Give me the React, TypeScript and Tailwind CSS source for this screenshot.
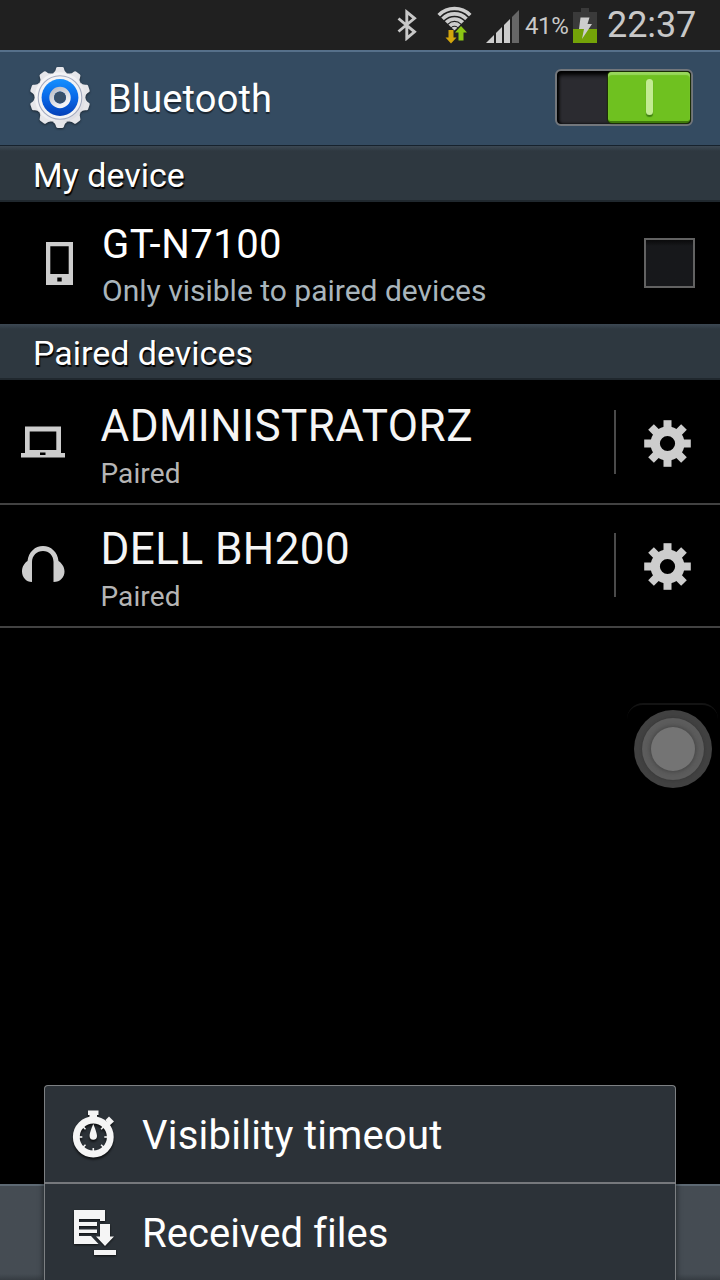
import type { ReactNode } from "react"

type Device = { name: string; status: string; icon: ReactNode }

const BluetoothIcon = () => (
  <svg className="w-5 h-8 shrink-0" viewBox="397 9 20 32" fill="none">
    <path
      d="M398.5 18.5L414.5 31.8L406.8 38.3V12L414.5 18.3L398.5 31.5"
      stroke="#c8c8c8"
      strokeWidth="2.9"
    />
  </svg>
)

const WifiIcon = () => (
  <svg className="w-9 h-[38px] shrink-0" viewBox="437 6 36 38">
    <clipPath id="fan">
      <path d="M454.5 30.5L434.500 11V4H474.5V11Z" />
    </clipPath>
    <g clipPath="url(#fan)" fill="none" stroke="#cdcdcd" strokeWidth="3.7">
      <circle cx="454.5" cy="30.5" r="22" />
      <circle cx="454.5" cy="30.5" r="16.7" />
      <circle cx="454.5" cy="30.5" r="11.5" />
      <circle cx="454.5" cy="30.5" r="6.6" />
      <circle cx="454.5" cy="30.5" r="2" />
    </g>
    <path d="M448.5 30H453.5V37.5H456.5L451 43.5L445.5 37.5H448.5Z" fill="#d3a50c" />
    <path d="M458.5 40.5H463.5V32.5H467L461 26L455 32.5H458.5Z" fill="#8bc514" />
  </svg>
)

const SignalIcon = () => (
  <svg className="w-[34px] h-[34px] shrink-0" viewBox="486 10 34 34">
    <path d="M486 43L494 35V43Z" fill="#cdcdcd" />
    <path d="M496 33L502 27V43H496Z" fill="#cdcdcd" />
    <path d="M504 25L510 19V43H504Z" fill="#cdcdcd" />
    <path d="M512 17L519 10V43H512Z" fill="#666" />
  </svg>
)

const BatteryIcon = () => (
  <svg className="w-6 h-9 shrink-0" viewBox="573 8 24 36">
    <path d="M581 8H589V12H597V29H573V12H581Z" fill="#3a3a3a" />
    <path d="M573 29H597V43H573Z" fill="#74a308" />
    <path d="M580.5 17.5H589.5L587.5 24H592L582 39L584 29H579Z" fill="#cdcdcd" />
  </svg>
)

const SettingsLogo = () => (
  <svg
    className="w-16 h-16 shrink-0 drop-shadow-[0_1px_1px_rgba(0,0,0,0.5)]"
    viewBox="-32 -32.5 64 64"
  >
    <defs>
      <linearGradient id="metal" x1="0" y1="0" x2="1" y2="1">
        <stop offset="0" stopColor="#f6f6f8" />
        <stop offset="0.55" stopColor="#f0f0f3" />
        <stop offset="1" stopColor="#d5d5dc" />
      </linearGradient>
      <linearGradient id="blue" x1="0" y1="0" x2="0" y2="1">
        <stop offset="0" stopColor="#1590ff" />
        <stop offset="0.5" stopColor="#0868e8" />
        <stop offset="1" stopColor="#0540b8" />
      </linearGradient>
      <linearGradient id="ring" x1="0" y1="0" x2="0.6" y2="1">
        <stop offset="0" stopColor="#b9bcc6" />
        <stop offset="1" stopColor="#f4f4f6" />
      </linearGradient>
    </defs>
    {[0, 36, 72, 108, 144, 180, 216, 252, 288, 324].map((angle) => (
      <path
        key={angle}
        d="M-8 -24Q-4.5 -25.5 -4 -29Q-3.7 -30.4 -2.3 -30.4H2.3Q3.7 -30.4 4 -29Q4.5 -25.5 8 -24Z"
        fill="#e6e6ea"
        transform={`rotate(${angle})`}
      />
    ))}
    <circle r="25.2" fill="url(#metal)" />
    <circle r="21.8" fill="#f3f3f5" stroke="#a4abc0" strokeWidth="1.1" />
    <circle r="18.4" fill="url(#blue)" />
    <circle r="8.3" fill="none" stroke="url(#ring)" strokeWidth="4.8" />
    <circle r="6" fill="#38506a" />
  </svg>
)

const Gear = () => (
  <svg className="w-12 h-12 shrink-0" viewBox="-23.5 -23.5 48 48" fill="#cdcdcd">
    {[0, 45, 90, 135, 180, 225, 270, 315].map((angle) => (
      <rect key={angle} x="-4" y="-23.3" width="8" height="11" transform={`rotate(${angle})`} />
    ))}
    <circle r="12.3" fill="none" stroke="#cdcdcd" strokeWidth="9.4" />
  </svg>
)

const PhoneIcon = () => (
  <svg className="w-[27px] h-[43px] shrink-0" viewBox="0 0 27 43">
    <path
      d="M0 0H27V43H0ZM4.3 4.3V32H22.7V4.3ZM11.3 35.5V39.5H15.7V35.5Z"
      fill="#cdcdcd"
      fillRule="evenodd"
    />
  </svg>
)

const LaptopIcon = () => (
  <svg className="w-11 h-[34px] shrink-0" viewBox="0 0 44 34">
    <path
      d="M4 0.5H40V27H44V31.5H0V27H4ZM8.7 5.5V24H35.3V5.5ZM19 26.5V29H24.5V26.5Z"
      fill="#cdcdcd"
      fillRule="evenodd"
    />
  </svg>
)

const HeadphonesIcon = () => (
  <svg className="w-11 h-10 shrink-0" viewBox="0 0 44 40">
    <path
      d="M11 36C5 36 1 31 1 25.5C1 20.5 3.5 17 6.5 15C7.5 6 14 0 22 0S36.5 6 37.5 15C40.5 17 43.5 20.5 43.5 25.5C43.5 31 39.5 36 32.5 36V16C32.5 9.5 28 5 22 5S11 9.5 11 16Z"
      fill="#cdcdcd"
    />
  </svg>
)

const TimerIcon = () => (
  <svg
    className="w-[46px] h-12 shrink-0 drop-shadow-[0_2px_1px_rgba(0,0,0,0.7)]"
    viewBox="72 1110 46 48"
  >
    <path d="M88 1110.5H98.5V1115H97V1120H89.5V1115H88Z" fill="#f5f5f5" />
    <path d="M105.5 1120L109 1116.5L114 1121.5L109 1126Z" fill="#f5f5f5" />
    <circle cx="93.3" cy="1137" r="17" fill="none" stroke="#f5f5f5" strokeWidth="6.8" />
    {[45, 90, 135, 180, 225, 270, 315].map((angle) => (
      <path
        key={angle}
        d="M93.3 1122.5V1126"
        stroke="#f5f5f5"
        strokeWidth="1.6"
        transform={`rotate(${angle} 93.3 1137)`}
      />
    ))}
    <path
      d="M93.3 1124C94.5 1127 97 1133 97 1136A3.7 3.7 0 0 1 89.6 1136C89.6 1133 92 1127 93.3 1124Z"
      fill="#f5f5f5"
    />
  </svg>
)

const ReceivedIcon = () => (
  <svg
    className="w-[46px] h-12 shrink-0 drop-shadow-[0_1px_1px_rgba(0,0,0,0.7)]"
    viewBox="72 1209 46 48"
  >
    <path
      d="M74 1210H105V1221H100V1219H79V1222H97V1226H79V1229.5H97V1233H79V1236H91L98.5 1244H74Z"
      fill="#f5f5f5"
    />
    <path d="M100 1224H110V1236.5H114L105 1246L96 1236.5H100Z" fill="#f5f5f5" />
    <path d="M94 1250H116V1255H94Z" fill="#f5f5f5" />
  </svg>
)

const devices: Device[] = [
  { name: "ADMINISTRATORZ", status: "Paired", icon: <LaptopIcon /> },
  { name: "DELL BH200", status: "Paired", icon: <HeadphonesIcon /> },
]

const StatusBar = () => (
  <div className="flex h-[50px] bg-[#202020] text-[#c8c8c8]">
    <div className="ml-auto mt-[9px]">
      <BluetoothIcon />
    </div>
    <div className="ml-5 mt-1.5">
      <WifiIcon />
    </div>
    <div className="ml-[13px] mt-2.5">
      <SignalIcon />
    </div>
    <span className="ml-[5px] w-12 text-[24px] leading-[52px] tracking-[-0.4px]">41%</span>
    <div className="mt-2">
      <BatteryIcon />
    </div>
    <span className="ml-2.5 w-[113px] text-[36px] leading-[50px] tracking-[-0.1px]">22:37</span>
  </div>
)

const Toggle = () => (
  <div className="flex justify-end w-[138px] h-[57px] rounded-md border-2 border-[#73777c] bg-[#2b2b30] py-px shadow-[inset_0_4px_4px_#000,inset_2px_0_3px_#000]">
    <div className="mr-px flex w-[82px] h-[51px] items-center justify-center rounded border-b-2 border-[#3f7a0a] bg-[#6fc120] shadow-[inset_0_3px_1px_#98d65c,0_0_1px_1px_#1c3005]">
      <div className="ml-px w-[7px] h-9 rounded-full bg-[#c3eb93] shadow-[0_2px_1px_#3f8010]" />
    </div>
  </div>
)

const SectionTitle = ({ children }: { children: ReactNode }) => (
  <h2 className="h-14 border-b-2 border-[#20282e] bg-linear-to-b from-[#3c4853] to-[#2e3840] to-[5px] pl-[33px] text-[34px] leading-[58px] text-white [text-shadow:1px_2px_1px_#000]">
    {children}
  </h2>
)

const DeviceRow = ({ name, status, icon }: Device) => (
  <div className="flex h-[123px] border-b-2 border-[#424242]">
    <div className="flex w-[100.5px] items-center pl-[21px]">{icon}</div>
    <div className="flex-1 pt-[18px]">
      <p className="whitespace-nowrap text-[44px] leading-[52px] tracking-[0.45px] text-[#f5f5f5]">
        {name}
      </p>
      <p className="mt-1.5 text-[28px] leading-8 tracking-[0.1px] text-[#b5b5b5]">{status}</p>
    </div>
    <div className="mt-7 flex h-16 w-[106px] items-center border-l-2 border-[#4a4a4a] pl-7 pt-1">
      <Gear />
    </div>
  </div>
)

const AssistiveButton = () => (
  <div className="absolute left-[627px] top-[703px] flex h-[90px] w-[91px] justify-center rounded-2xl border-t-2 border-[#131313] pt-[5px]">
    <div className="flex size-[78px] items-center justify-center rounded-full bg-[#414141]">
      <div className="flex size-[62px] items-center justify-center rounded-full bg-[#5c5c5c] shadow-[0_0_3px_#333]">
        <div className="size-11 rounded-full bg-[#747474] shadow-[0_0_4px_1px_#444]" />
      </div>
    </div>
  </div>
)

const OptionsMenu = () => (
  <div className="absolute bottom-0 left-11 h-[195px] w-[632px] rounded-t-sm border border-b-0 border-[#7d8083] bg-[#2c3238] text-[40px] leading-[100px] text-white shadow-[0_0_6px_rgba(0,0,0,0.6)]">
    <div className="flex h-[98px] border-b-2 border-[#76787c] pl-[27px]">
      <div className="mt-6">
        <TimerIcon />
      </div>
      <span className="ml-6 tracking-[0.25px]">Visibility timeout</span>
    </div>
    <div className="flex h-24 pl-[27px]">
      <div className="mt-[25px]">
        <ReceivedIcon />
      </div>
      <span className="ml-6 tracking-[0.05px]">Received files</span>
    </div>
  </div>
)

export default function App() {
  return (
    <div className="relative flex h-[1280px] w-[720px] flex-col overflow-hidden bg-black font-['Roboto',sans-serif]">
      <StatusBar />
      <header className="flex h-24 border-b border-t-2 border-b-[#17222d] border-t-[#56708a] bg-[#344b61] text-white">
        <div className="ml-7 mt-[13px]">
          <SettingsLogo />
        </div>
        <h1 className="ml-4 text-[38px] leading-[95px] tracking-[0.15px] [text-shadow:0_2px_1px_rgba(0,0,0,0.5)]">
          Bluetooth
        </h1>
        <div className="ml-auto mr-[27px] mt-[17px]">
          <Toggle />
        </div>
      </header>
      <SectionTitle>My device</SectionTitle>
      <div className="flex h-[122px]">
        <div className="ml-[46px] mt-10">
          <PhoneIcon />
        </div>
        <div className="ml-[29px] pt-[19px]">
          <p className="text-[40px] leading-[48px] tracking-[0.5px] text-white">GT-N7100</p>
          <p className="mt-1 text-[30px] leading-9 text-[#a9b5bc]">
            Only visible to paired devices
          </p>
        </div>
        <div className="ml-auto mr-[25px] mt-9 h-[50px] w-[51px] border-2 border-[#626262] bg-linear-to-b from-[#0a0a0b] to-[#17181b] to-[6px]" />
      </div>
      <SectionTitle>Paired devices</SectionTitle>
      <div className="pt-0.5">
        {devices.map((device) => (
          <DeviceRow key={device.name} {...device} />
        ))}
      </div>
      <div className="mt-auto h-24 border-t-2 border-[#5d6973] bg-linear-to-b from-[#454c53] from-[88px] to-[#363c42]" />
      <AssistiveButton />
      <OptionsMenu />
    </div>
  )
}
